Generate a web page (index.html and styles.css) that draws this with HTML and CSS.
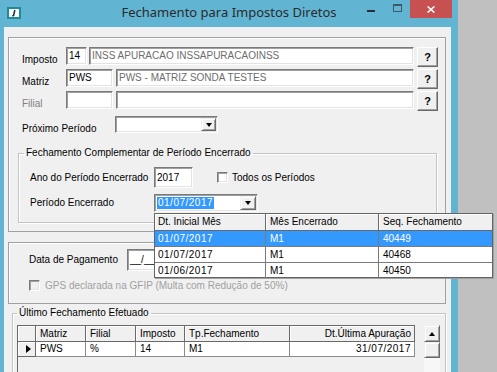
FILE: index.html
```html
<!DOCTYPE html>
<html>
<head>
<meta charset="utf-8">
<title>Fechamento para Impostos Diretos</title>
<link rel="stylesheet" href="styles.css">
</head>
<body>
<div class="screen">
  <div class="window">
    <div class="titlebar">
      <div class="tb-left">
        <svg class="app-icon" width="14" height="12" viewBox="0 0 14 12">
          <rect x="1" y="1" width="12" height="10" fill="#ffffff" stroke="#1f8b98" stroke-width="2"/>
          <path d="M7.8 3 L6.6 8.6" stroke="#17363d" stroke-width="1.6" fill="none"/>
          <path d="M5 8.8 H7.2" stroke="#17363d" stroke-width="1.2" fill="none"/>
        </svg>
      </div>
      <div class="tb-title">Fechamento para Impostos Diretos</div>
      <div class="tb-right">
        <span class="btn-min"></span>
        <span class="btn-max"></span>
        <span class="btn-close">
          <svg width="8" height="7" viewBox="0 0 8 7"><path d="M0.6 0.4 L7.4 6.6 M7.4 0.4 L0.6 6.6" stroke="#ffffff" stroke-width="1.5" fill="none"/></svg>
        </span>
      </div>
    </div>

    <div class="client">
      <div class="panel panel-top">
        <div class="frow">
          <span class="lbl lbl-low w44">Imposto</span>
          <span class="edit w21">14</span>
          <span class="edit ro w325 ml2">INSS APURACAO INSSAPURACAOINSS</span>
          <span class="qbtn ml3">?</span>
        </div>
        <div class="frow">
          <span class="lbl lbl-low w44">Matriz</span>
          <span class="edit w47">PWS</span>
          <span class="edit ro w298 ml3">PWS - MATRIZ SONDA TESTES</span>
          <span class="qbtn ml3">?</span>
        </div>
        <div class="frow">
          <span class="lbl lbl-low lbl-dis w44">Filial</span>
          <span class="edit w47"></span>
          <span class="edit ro w298 ml3"></span>
          <span class="qbtn ml3">?</span>
        </div>
        <div class="frow frow-prox">
          <span class="lbl lbl-low w93">Próximo Período</span>
          <span class="combo w103"><span class="combo-text"></span><span class="ddbtn"><i class="tri-down"></i></span></span>
        </div>

        <fieldset class="group g1">
          <legend>Fechamento Complementar de Período Encerrado</legend>
          <div class="g1-body">
            <div class="grow">
              <span class="lbl w124">Ano do Período Encerrado</span>
              <span class="edit tall w39">2017</span>
              <span class="chk ml24"></span>
              <span class="lbl ml4">Todos os Períodos</span>
            </div>
            <div class="grow grow2">
              <span class="lbl w124">Período Encerrado</span>
              <span class="combo combo-18 w104"><span class="combo-text"><span class="sel dt">01/07/2017</span></span><span class="ddbtn w16"><i class="tri-down"></i></span></span>
            </div>
          </div>
        </fieldset>
      </div>

      <div class="panel panel-mid">
        <div class="prow">
          <span class="lbl w98">Data de Pagamento</span>
          <span class="edit tall22 w80">__/__/____</span>
        </div>
        <div class="prow prow-gps">
          <span class="chk chk-dis"></span>
          <span class="lbl lbl-gray ml5">GPS declarada na GFIP (Multa com Redução de 50%)</span>
        </div>
      </div>

      <fieldset class="group g2">
        <legend>Último Fechamento Efetuado</legend>
        <div class="grid">
          <div class="gtable">
            <div class="ghead">
              <span class="gh c0"></span>
              <span class="gh c1">Matriz</span>
              <span class="gh c2">Filial</span>
              <span class="gh c3">Imposto</span>
              <span class="gh c4">Tp.Fechamento</span>
              <span class="gh c5 right">Dt.Última Apuração</span>
            </div>
            <div class="grow-data">
              <span class="gc c0 ind"><i class="tri-right"></i></span>
              <span class="gc c1">PWS</span>
              <span class="gc c2">%</span>
              <span class="gc c3">14</span>
              <span class="gc c4">M1</span>
              <span class="gc c5 right dt">31/07/2017</span>
            </div>
          </div>
          <div class="sbar">
            <span class="sb-btn"><i class="tri-up"></i></span>
            <span class="sb-thumb"></span>
            <span class="sb-track"></span>
          </div>
        </div>
      </fieldset>
    </div>
  </div>
  <div class="desk"></div>
</div>

<div class="dropdown">
  <div class="dd-head">
    <span class="dh d1">Dt. Inicial Mês</span>
    <span class="dh d2">Mês Encerrado</span>
    <span class="dh d3">Seq. Fechamento</span>
  </div>
  <div class="dd-row selected">
    <span class="dc d1 dt">01/07/2017</span>
    <span class="dc d2">M1</span>
    <span class="dc d3">40449</span>
  </div>
  <div class="dd-row">
    <span class="dc d1 dt">01/07/2017</span>
    <span class="dc d2">M1</span>
    <span class="dc d3">40468</span>
  </div>
  <div class="dd-row last">
    <span class="dc d1 dt">01/06/2017</span>
    <span class="dc d2">M1</span>
    <span class="dc d3">40450</span>
  </div>
</div>
</body>
</html>
```

FILE: styles.css
```css
* { box-sizing: border-box; }
html, body { margin: 0; padding: 0; }
body {
  width: 497px;
  height: 372px;
  overflow: hidden;
  position: relative;
  background: #c0c0c0;
  font-family: "Liberation Sans", Arial, sans-serif;
  font-size: 10px;
  color: #000;
}
i { display: block; }

.screen { display: flex; height: 372px; }
.window {
  width: 458px;
  flex: none;
  background: #62b4d3;
  display: flex;
  flex-direction: column;
}
.desk { flex: 1; background: #c0c0c0; }

/* title bar */
.titlebar {
  height: 27px;
  flex: none;
  display: grid;
  grid-template-columns: 1fr auto 1fr;
}
.tb-left { display: flex; align-items: flex-start; padding: 7px 0 0 7px; }
.tb-title {
  font-family: "Noto Sans", "Open Sans", sans-serif;
  font-size: 13px;
  line-height: 24px;
  color: #2b2b2b;
  white-space: nowrap;
}
.tb-right { display: flex; justify-content: flex-end; align-items: flex-start; }
.btn-min { width: 8px; height: 2px; margin-top: 10px; background: #253036; }
.btn-max {
  width: 9px; height: 8px; margin: 4px 0 0 18px;
  border: 1px solid #3f5866; border-top-width: 2px;
}
.btn-close {
  width: 42px; height: 18px; margin: 0 6px 0 8px;
  background: #c75050;
  display: flex; align-items: center; justify-content: center;
}

/* client */
.client {
  flex: 1;
  margin: 0 7px 0 4px;
  background: #f0f0f0;
  padding-top: 10px;
}
.panel {
  margin-left: 4px;
  width: 438px;
  border: 1px solid #a0a0a0;
  box-shadow: inset 1px 1px 0 #ffffff;
}
.panel-top { height: 195px; padding: 9px 0 0 13px; }
.panel-mid { height: 62px; margin-top: 10px; padding: 6px 0 0 20px; }

.frow { display: flex; align-items: flex-start; height: 20px; margin-bottom: 2px; }
.frow-prox { margin-top: 5px; height: 17px; }

.lbl { white-space: nowrap; line-height: 18px; }
.lbl-low { padding-top: 4px; }
.lbl-dis { color: #808080; }
.lbl-gray { color: #a0a0a0; line-height: 11px; }

.w16 { width: 16px !important; }
.w21 { width: 21px; }
.w39 { width: 39px; }
.w44 { width: 44px; flex: none; }
.w47 { width: 47px; }
.w80 { width: 80px; }
.w93 { width: 93px; flex: none; }
.w98 { width: 98px; flex: none; }
.w103 { width: 103px; }
.w104 { width: 104px; }
.w124 { width: 124px; flex: none; }
.w298 { width: 298px; }
.w325 { width: 325px; }
.ml2 { margin-left: 2px; }
.ml3 { margin-left: 3px; }
.ml4 { margin-left: 4px; }
.ml5 { margin-left: 5px; }
.ml24 { margin-left: 24px; }

.edit {
  flex: none;
  height: 18px;
  line-height: 16px;
  padding: 0 2px;
  background: #ffffff;
  border: 1px solid;
  border-color: #7a7a7a #ffffff #ffffff #7a7a7a;
  box-shadow: inset 1px 1px 0 #a0a0a0, inset -1px -1px 0 #e3e3e3;
  white-space: nowrap;
  overflow: hidden;
}
.edit.ro { color: #6d6d6d; }
.edit.tall { height: 21px; line-height: 19px; }
.edit.tall22 { height: 22px; line-height: 20px; }

.qbtn {
  flex: none;
  width: 21px; height: 20px;
  background: #f0f0f0;
  border: 1px solid;
  border-color: #ffffff #696969 #696969 #ffffff;
  box-shadow: inset -1px -1px 0 #a0a0a0;
  font-weight: bold;
  font-size: 11px;
  display: flex; align-items: center; justify-content: center;
}

.combo {
  flex: none;
  height: 17px;
  display: flex;
  justify-content: space-between;
  padding: 1px;
  background: #ffffff;
  border: 1px solid;
  border-color: #7a7a7a #ffffff #ffffff #7a7a7a;
  box-shadow: inset 1px 1px 0 #a0a0a0, inset -1px -1px 0 #e3e3e3;
}
.combo-18 { height: 18px; }
.combo-text { display: flex; align-items: center; padding-left: 1px; }
.sel { background: #3399ff; color: #ffffff; line-height: 12px; padding: 0 1px; }
.dt { letter-spacing: 0.5px; }
.ddbtn {
  width: 15px;
  background: #f0f0f0;
  border: 1px solid;
  border-color: #f0f0f0 #696969 #696969 #f0f0f0;
  box-shadow: inset 1px 1px 0 #ffffff, inset -1px -1px 0 #a0a0a0;
  display: flex; align-items: center; justify-content: center;
}
.tri-down {
  width: 0; height: 0;
  border-left: 3.5px solid transparent;
  border-right: 3.5px solid transparent;
  border-top: 4px solid #000;
}
.tri-up {
  width: 0; height: 0;
  border-left: 3.5px solid transparent;
  border-right: 3.5px solid transparent;
  border-bottom: 4px solid #000;
}
.tri-right {
  width: 0; height: 0;
  border-top: 4.5px solid transparent;
  border-bottom: 4.5px solid transparent;
  border-left: 5px solid #000;
}

/* group boxes */
.group {
  margin: 0;
  border: 1px solid #c4c4c4;
  box-shadow: 1px 1px 0 #ffffff, inset 1px 1px 0 #ffffff;
}
.group legend { padding: 0 2px; line-height: 12px; }
.g1 { margin: 14px 8px 0 -4px; padding: 8px 0 10px 5px; }
.g1-body { padding-left: 6px; }
.grow { display: flex; align-items: center; height: 21px; }
.grow2 { margin-top: 6px; height: 18px; }

.chk {
  flex: none;
  width: 11px; height: 11px;
  background: #ffffff;
  border: 1px solid;
  border-color: #7a7a7a #ffffff #ffffff #7a7a7a;
  box-shadow: inset 1px 1px 0 #a0a0a0, inset -1px -1px 0 #e3e3e3;
}
.chk-dis { background: #f0f0f0; }

.prow { display: flex; align-items: center; height: 22px; }
.prow-gps { height: 11px; margin-top: 9px; }

.g2 {
  margin: 3px 0 0 8px;
  width: 434px;
  height: 80px;
  padding: 6px 0 0 4px;
}

/* grid */
.grid { display: flex; width: 423px; height: 60px; }
.gtable {
  width: 398px;
  border-left: 1px solid #696969;
  border-top: 1px solid #696969;
}
.ghead, .grow-data { display: flex; }
.gh {
  height: 16px;
  line-height: 15px;
  padding-left: 4px;
  background: #f0f0f0;
  border-right: 1px solid #696969;
  border-bottom: 1px solid #696969;
  box-shadow: inset 1px 1px 0 #ffffff;
  white-space: nowrap;
}
.gc {
  height: 15px;
  line-height: 14px;
  padding-left: 4px;
  background: #ffffff;
  border-right: 1px solid #8a8a8a;
  border-bottom: 1px solid #8a8a8a;
  white-space: nowrap;
}
.gc.ind {
  background: #f0f0f0;
  border-color: #696969;
  box-shadow: inset 1px 1px 0 #ffffff;
  display: flex; align-items: center; padding-left: 8px;
}
.right { text-align: right; padding-right: 3px; }
.c0 { width: 18px; flex: none; }
.c1 { width: 50px; flex: none; }
.c2 { width: 50px; flex: none; }
.c3 { width: 49px; flex: none; }
.c4 { width: 105px; flex: none; }
.c5 { width: 125px; flex: none; }

.sbar { width: 16px; margin-left: 9px; display: flex; flex-direction: column; }
.sb-btn, .sb-thumb {
  flex: none;
  background: #f0f0f0;
  border: 1px solid;
  border-color: #f0f0f0 #696969 #696969 #f0f0f0;
  box-shadow: inset 1px 1px 0 #ffffff, inset -1px -1px 0 #a0a0a0;
}
.sb-btn { height: 17px; display: flex; align-items: center; justify-content: center; }
.sb-thumb { height: 16px; }
.sb-track { flex: 1; background: #f7f7f7; }

/* dropdown list (popup) */
.dropdown {
  position: absolute;
  left: 154px;
  top: 213px;
  width: 339px;
  height: 65px;
  background: #ffffff;
  border: 1px solid #646464;
  box-shadow: 1px 1px 0 #a0a0a0;
}
.dd-head, .dd-row { display: flex; }
.dh {
  height: 17px;
  line-height: 16px;
  padding-left: 3px;
  background: #f0f0f0;
  border-right: 1px solid #696969;
  border-bottom: 1px solid #696969;
  box-shadow: inset 1px 1px 0 #ffffff;
  white-space: nowrap;
}
.dc {
  height: 16px;
  line-height: 15px;
  padding-left: 3px;
  border-right: 1px solid #7a7a7a;
  border-bottom: 1px solid #7a7a7a;
  white-space: nowrap;
}
.dd-row.last .dc { height: 15px; border-bottom: none; }
.dd-row.selected { background: #3399ff; color: #ffffff; }
.d1 { width: 111px; flex: none; }
.d2 { width: 113px; flex: none; padding-left: 4px; }
.d3 { flex: 1; padding-left: 4px; border-right: none; }
```
